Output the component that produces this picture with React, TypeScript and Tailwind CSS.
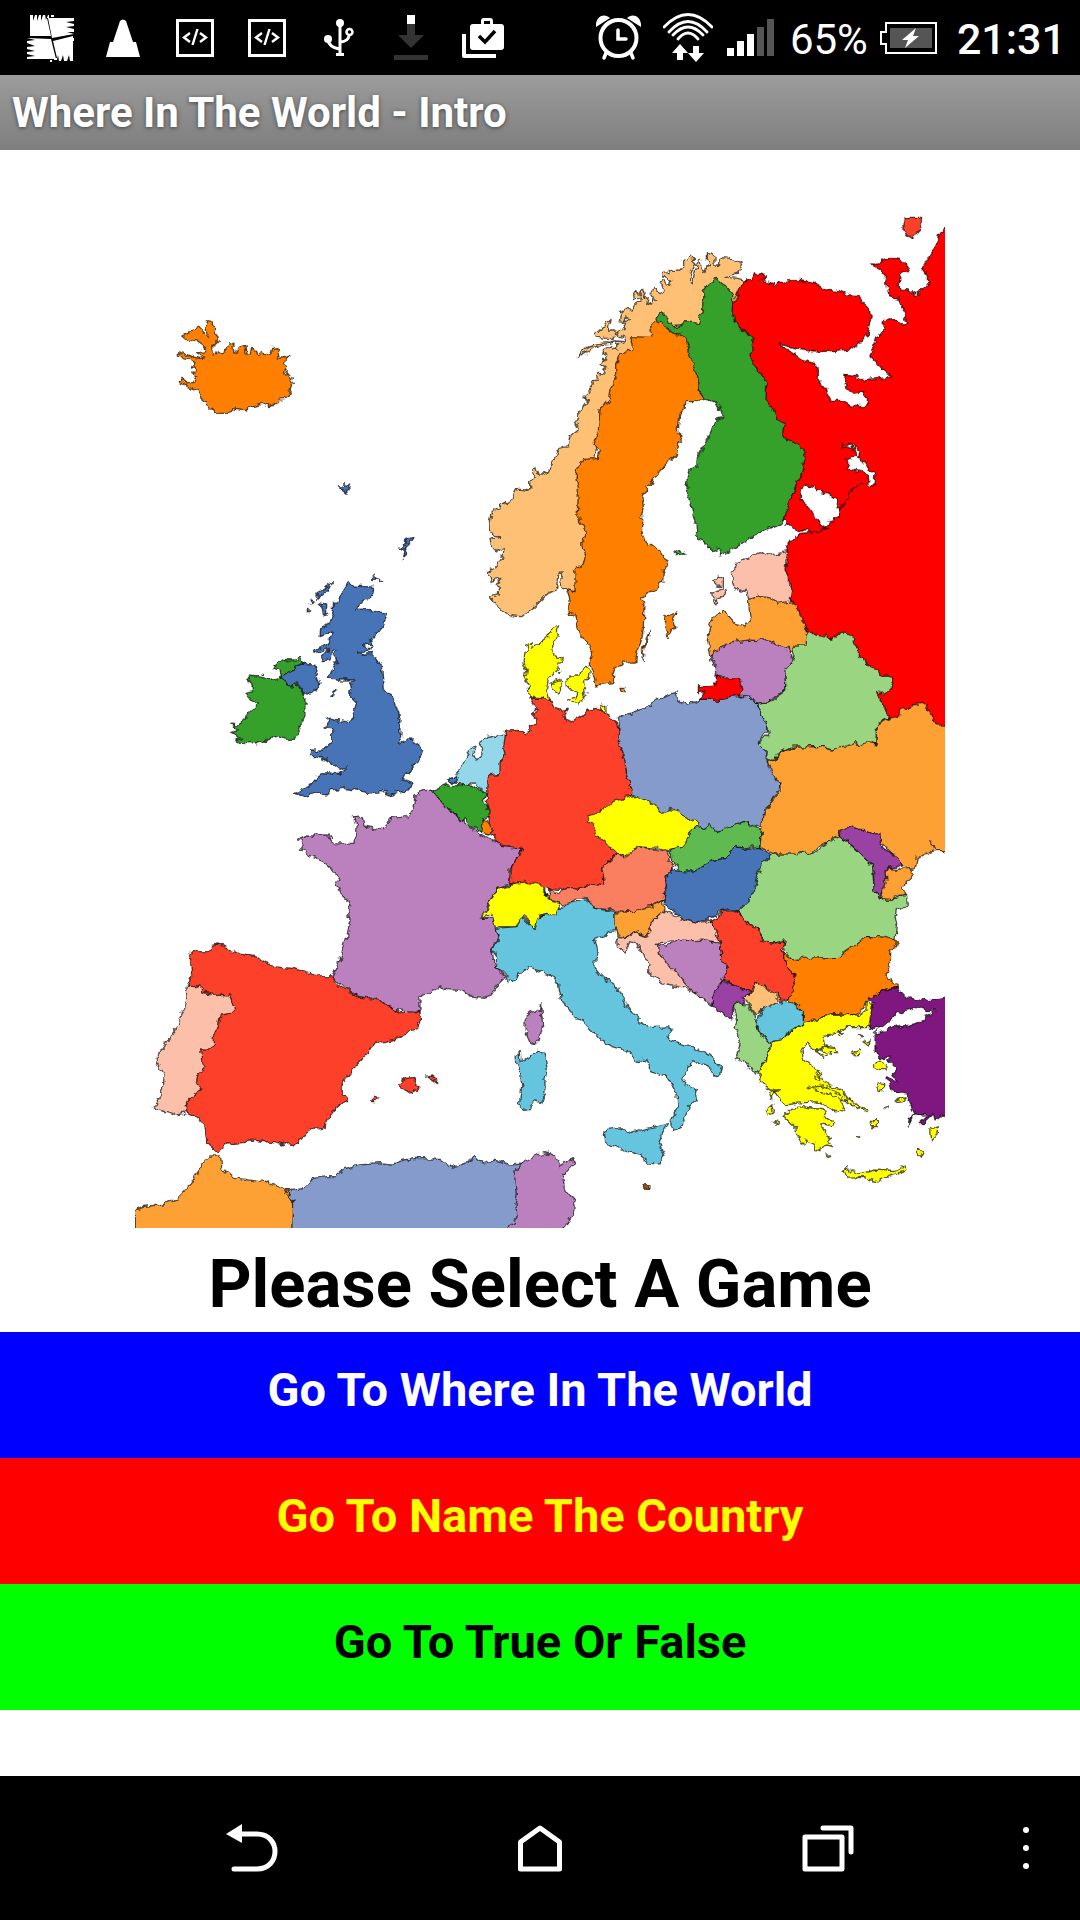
import React from 'react';

type Shape = [fill: string, d: string];
type Sheet = { x: number; y: number; shapes: Shape[] };

const RED = '#ff0000';
const SCARLET = '#fd4129';
const ORANGE = '#ff8000';
const AMBER = '#fea135';
const SAND = '#fdc074';
const GREEN = '#34a12c';
const MINT = '#9ad582';
const BLUE = '#4673b7';
const SLATE = '#849bcb';
const SKY = '#65c5de';
const LILAC = '#bb80be';
const VIOLET = '#9a42a4';
const PURPLE = '#80187f';
const PINK = '#fcbfaa';
const YELLOW = '#ffff00';
const WHITE = '#ffffff';

// Each sheet is one part of the continent, placed by its own origin.
const sheets: Sheet[] = [
  {
    x: 360, y: 600,
    shapes: [
      [ORANGE, 'M185 408L208 398 218 385 235 378 242 385 250 402 262 410 256 375 260 362 272 364 282 375 286 395 295 420 278 440 280 465 300 452 305 462 318 458 328 425 338 430 342 460 350 458 355 442 378 436 382 468 390 468 395 445 404 448 412 465 428 455 440 466 452 462 458 442 470 440 478 475 510 468 490 485 500 498 490 515 505 525 520 545 512 560 510 580 495 595 475 598 465 615 450 620 430 612 400 620 375 632 335 626 325 640 290 640 270 622 250 605 240 578 212 562 180 552 182 540 190 538 195 548 220 548 230 530 218 520 230 508 216 500 225 488 208 478 175 468 175 458 200 465 240 475 250 470 230 458 258 455 250 435 232 422 205 425Z'],
      [BLUE, 'M655 860L668 860 672 850 680 860 692 852 688 868 678 880 665 870Z'],
      [BLUE, 'M882 1008L860 1015 850 1030 855 1040 840 1045 855 1050 850 1075 860 1060 862 1030 878 1020Z'],
    ],
  },
  {
    x: 2100, y: 600,
    shapes: [
      [RED, 'M138 240L158 238 163 218 178 222 200 228 198 236 180 240 218 250 222 266 232 248 250 246 268 242 300 241 345 250 378 270 420 275 450 288 478 290 490 308 508 325 512 360 502 400 480 430 455 447 400 452 345 456 290 448 235 430 252 445 270 455 310 480 345 490 355 510 355 540 380 570 390 604 425 604 450 618 495 620 503 600 488 575 462 580 432 555 435 525 470 530 490 542 530 538 578 527 558 517 530 490 510 470 525 420 548 395 550 362 585 358 600 370 620 372 612 335 595 295 567 290 560 250 545 210 508 192 535 192 550 182 570 172 605 180 628 205 600 225 598 265 625 270 648 284 685 255 680 225 668 205 690 165 705 145 715 110 735 80 770 70V1590H700L520 1540 325 1350 325 1295 295 1230 272 1200 275 1170 265 1140 255 1110 262 1080 262 1055 258 1030 275 1025 300 1000 368 994 330 997 320 990 290 990 262 975 255 960 235 970 200 940 180 800 110 520 70 330Z'],
      [WHITE, 'M318 855L345 860 350 872 380 878 410 900 418 945 405 955 398 962 384 965 378 985 365 975 345 950 330 925 300 900 305 870Z'],
      [WHITE, 'M420 728L432 740 455 735 478 755 476 772 490 790 525 815 522 858 505 855 502 830 490 815 450 808 440 780 468 768 460 745 430 740Z'],
      ['none', 'M415 930L440 900 455 872 475 855 495 852M430 780L440 770M360 992L380 985'],
      [SCARLET, 'M612 52L665 52 662 90 640 114 622 108 612 95Z'],
    ],
  },
  {
    x: 1380, y: 690,
    shapes: [
      [SAND, 'M848 105L835 95 815 92 808 82 790 80 778 90 775 112 765 108 765 80 742 68 742 90 750 105 740 108 735 125 727 118 725 95 715 88 712 118 703 122 695 158 688 152 695 125 708 100 700 92 700 78 690 75 682 92 668 90 668 108 660 120 640 122 628 115 622 128 605 130 605 145 618 140 635 150 632 165 620 165 612 152 602 160 608 178 600 192 582 175 570 185 580 200 590 210 575 205 575 225 560 220 565 205 550 200 555 190 548 178 540 195 530 178 518 195 520 210 540 200 545 215 525 225 512 242 500 235 485 245 478 272 495 275 500 255 505 270 490 280 495 295 482 305 470 302 478 318 495 325 490 340 470 345 470 360 450 350 430 360 425 375 440 370 440 390 430 388 420 400 438 410 425 420 435 432 412 430 410 450 398 452 400 465 385 470 388 490 375 500 382 515 370 530 355 545 360 560 345 580 355 600 330 620 325 650 300 655 280 690 265 725 248 735 238 735 230 712 215 725 225 740 212 755 212 780 185 775 170 775 160 795 155 810 140 820 110 835 95 850 90 880 92 912 122 918 90 925 95 955 105 965 130 950 125 985 105 1015 85 1025 90 1055 122 1045 108 1065 125 1075 115 1090 92 1100 105 1125 130 1145 160 1158 185 1160 230 1125 265 1090 290 1080 292 1045 300 1022 305 1070 335 1090 400 1050 400 700 450 500 600 340 700 300 800 200 822 215 840 175 858 150 835 146 795 140 835 130Z'],
      [SAND, 'M355 385L362 368 385 348 420 340 480 335 440 325 410 322 405 312 430 290 450 268 445 300 465 300 468 315 455 330 488 335 400 352 372 370Z'],
      [ORANGE, 'M585 272L640 290 690 330 700 400 715 430 715 480 732 508 700 515 678 515 675 535 662 548 658 565 655 600 665 635 650 655 645 680 610 710 590 735 580 740 575 765 555 768 560 785 545 800 550 830 545 860 545 910 560 942 580 945 600 960 625 1000 610 1030 608 1055 595 1065 590 1078 565 1085 545 1105 552 1120 550 1200 540 1240 530 1270 528 1295 490 1300 465 1315 460 1330 462 1358 408 1365 400 1335 388 1300 395 1265 370 1225 355 1200 345 1155 330 1150 330 1110 320 1080 345 1085 345 1020 370 1005 375 980 365 940 380 910 375 895 360 880 352 850 355 780 348 740 355 710 370 688 415 685 418 665 400 640 415 600 420 540 445 510 450 480 470 440 470 400 480 370 515 360 518 320 575 322 572 285Z'],
      [GREEN, 'M768 148L785 162 800 170 818 190 818 220 815 255 830 285 850 300 880 325 870 380 890 415 920 460 918 510 945 545 950 570 975 580 970 625 1010 640 1035 660 1032 710 1000 790 980 845 960 885 910 900 870 925 840 945 785 978 775 955 755 965 735 935 710 925 708 880 700 860 690 810 678 760 690 720 710 710 712 680 745 620 765 570 790 565 780 530 765 515 735 508 715 480 712 430 690 380 680 330 660 312 640 310 595 275 590 262 598 248 615 255 640 290 660 288 680 275 715 280 728 240 728 185 745 160Z'],
      [GREEN, 'M642 965L655 958 675 970 655 978Z'],
    ],
  },
  {
    x: 600, y: 1680,
    shapes: [
      [LILAC, 'M697 690L740 740 840 825 880 840 965 865 930 930 928 975 895 985 840 1075 880 1075 895 1140 875 1165 885 1225 920 1250 890 1280 870 1310 850 1315 820 1312 775 1288 740 1286 715 1278 690 1300 660 1310 660 1355 590 1350 525 1315 470 1310 395 1250 420 1200 440 1130 450 1085 445 1055 455 1035 425 1005 415 980 410 970 420 960 400 930 370 905 320 885 310 868 298 868 310 855 298 835 320 825 385 825 400 848 465 850 468 800 460 768 490 770 495 798 550 812 570 775 620 770 640 740 645 705 665 692Z'],
      ['#95d7ea', 'M770 655L775 640 795 600 808 570 825 558 820 580 830 600 845 585 848 570 838 548 860 530 880 525 922 530 935 570 930 600 912 645 880 680 870 710 820 672 770 670 745 665 760 650 745 655Z'],
      [BLUE, 'M742 658L755 648 762 655 774 652 770 664 758 670Z'],
      [GREEN, 'M697 690L735 675 760 680 800 670 825 685 860 700 850 720 862 738 872 750 870 770 850 780 850 820 815 800 795 775 780 785 765 760 740 745Z'],
      [ORANGE, 'M850 780L862 785 875 800 870 825 845 820Z'],
      [BLUE, 'M445 68L460 78 500 80 522 82 518 105 475 130 470 150 510 152 560 160 550 195 515 240 520 258 490 252 500 265 515 265 510 272 470 275 495 282 515 280 530 295 545 320 550 390 580 410 590 440 600 470 600 520 605 530 595 550 620 540 640 540 660 555 668 575 655 605 632 625 625 638 610 645 605 655 640 668 625 690 590 698 570 705 545 695 500 700 470 690 425 685 395 690 380 708 355 695 335 700 305 710 278 702 300 695 325 680 345 660 370 638 420 640 445 618 420 628 395 610 380 600 350 590 330 590 332 570 370 570 395 545 395 510 370 505 390 495 382 470 390 468 400 480 440 485 455 478 470 430 450 410 455 385 450 370 465 360 420 360 385 352 395 330 410 305 400 280 412 272 395 270 390 300 370 302 365 290 385 265 345 280 342 268 375 255 388 240 400 215 360 230 362 205 385 195 395 170 400 150 400 125 425 115 430 90Z'],
      [BLUE, 'M398 68L388 85 365 105 350 115 352 95 370 85ZM358 130L380 135 380 160 370 165 368 148ZM325 148L332 150 325 158ZM330 118L345 125 332 132ZM512 62L525 42 530 55 542 62 530 60ZM385 410L408 390 405 405 390 412Z'],
      [GREEN, 'M220 325L250 298 285 300 300 292 308 312 275 330 245 350 270 380 290 372 315 405 315 470 300 500 285 538 260 538 230 530 170 552 115 550 110 540 125 535 95 518 115 510 92 492 115 495 135 480 140 465 175 432 150 420 138 400 158 395 155 370 140 358 150 345 190 350 215 358 240 350 245 340Z'],
      [BLUE, 'M245 350L275 332 295 312 345 315 350 345 360 370 345 392 325 402 312 398 290 368 270 384Z'],
    ],
  },
  {
    x: 1440, y: 1800,
    shapes: [
      [ORANGE, 'M555 50L590 38 578 60 585 80 575 92 565 112 552 75ZM512 90L508 110 495 140 490 178 487 150 498 120ZM420 262L438 262 435 275 424 275Z'],
      [SLATE, 'M415 355L450 340 495 325 535 295 585 278 592 298 605 308 640 308 660 298 780 290 800 280 830 310 860 370 860 395 835 430 862 450 862 485 900 545 900 560 850 640 858 685 800 668 715 695 640 690 550 660 455 600 440 520 412 440 418 370Z'],
      [SCARLET, 'M150 295L205 295 215 315 250 335 268 325 255 345 258 358 280 365 305 350 325 330 355 328 385 345 398 360 412 370 418 400 415 430 435 480 440 530 455 575 455 600 340 650 410 760 365 805 375 855 340 850 300 868 230 868 90 850 95 800 125 745 60 735 35 700 25 650 22 600 25 525 60 520 60 490 75 460 70 440 80 390 120 388 135 405 150 395 148 375 172 372 160 340 168 325Z'],
      [YELLOW, 'M235 80L230 115 218 140 222 170 250 178 248 188 230 190 235 205 205 235 200 270 210 300 180 292 150 292 148 260 135 230 140 210 132 190 135 155 145 150 140 135 160 125 155 145 180 130 205 110 215 90Z'],
      [YELLOW, 'M210 250L240 238 245 270 235 283 215 270ZM260 240L275 225 300 225 305 200 320 200 328 215 325 235 310 245 318 275 305 305 290 312 265 300 285 292 290 275 262 260ZM362 312L378 320 378 335 362 330ZM235 215L240 215 238 222Z'],
      [YELLOW, 'M325 655L365 630 400 605 432 595 435 582 455 592 470 588 520 610 545 640 560 635 570 625 600 635 605 645 650 665 650 680 630 700 620 730 600 745 565 752 540 745 470 740 460 762 435 770 410 762 380 730 350 705 345 680Z'],
      ['#5fba50', 'M570 755L605 740 620 720 635 685 665 680 680 690 685 675 715 695 750 678 800 668 845 690 838 745 815 738 795 745 765 740 740 775 705 780 670 800 665 812 610 818 575 785Z'],
      ['#fa7f61', 'M205 865L235 880 260 865 300 868 340 850 375 855 365 805 410 762 435 770 475 740 565 755 568 785 580 800 575 820 555 830 560 855 550 880 555 900 520 915 500 930 460 938 400 930 345 925 325 895 290 895 262 915 240 910 210 900Z'],
      [BLUE, 'M555 835L580 805 610 815 640 818 670 800 675 792 705 780 740 775 765 740 795 745 835 742 880 765 845 820 820 900 795 930 745 930 720 935 690 955 650 968 605 955 560 915 550 890 560 860Z'],
    ],
  },
  {
    x: 2040, y: 1620,
    shapes: [
      [PINK, 'M150 95L165 80 190 60 240 38 270 45 322 35 325 45 318 60 315 90 325 110 325 135 335 150 330 185 290 195 235 168 205 175 200 148 185 158 165 145 160 120ZM98 125L115 108 130 118 130 140 110 138ZM98 155L125 148 142 145 130 170 110 178 108 195 100 175Z'],
      [AMBER, 'M82 300L95 240 128 210 145 225 165 250 195 258 210 235 205 180 235 165 270 172 295 190 330 182 355 200 358 225 385 275 375 318 330 335 200 340 92 345Z'],
      [LILAC, 'M92 345L130 315 170 305 210 300 230 302 245 290 260 302 275 305 325 325 332 350 345 360 330 380 315 400 318 450 285 470 270 485 230 490 215 470 180 465 185 420 108 405 105 385Z'],
      [RED, 'M55 440L105 435 105 402 130 415 180 412 180 430 187 450 180 465 130 478 60 478 75 455 55 458Z'],
      [MINT, 'M335 325L350 315 375 315 378 285 395 280 430 288 435 280 455 298 475 280 500 280 520 290 525 315 535 325 535 345 550 355 560 375 595 390 600 408 625 405 640 425 630 450 615 458 590 460 610 495 625 535 595 550 590 610 550 615 460 630 420 620 330 622 295 640 285 660 270 665 258 655 262 635 235 612 265 580 260 555 230 490 275 485 290 470 318 450 315 395 342 355Z'],
      [MINT, 'M280 942L365 935 390 945 445 910 475 880 530 930 578 980 582 1050 610 1082 650 1075 665 1062 680 1065 682 1100 665 1112 650 1102 645 1130 650 1150 645 1200 560 1190 520 1225 480 1252 400 1255 340 1262 310 1225 315 1205 250 1210 240 1170 200 1150 175 1110 215 1075 235 1000 250 970Z'],
      [AMBER, 'M262 665L285 660 300 640 330 622 425 620 460 630 480 620 510 618 525 605 535 620 560 608 592 612 592 555 625 535 655 530 660 510 685 508 695 495 725 490 745 505 755 530 768 555 830 555V932H765L740 940 712 955 705 985 670 980 600 900 510 875 475 885 445 910 410 922 390 945 365 935 350 942 285 942 240 920 245 870 248 830 270 790 300 750 300 735 275 700ZM615 985L650 988 700 985 690 1015 668 1040 678 1062 650 1068 635 1082 605 1078Z'],
      [VIOLET, 'M475 878L515 858 530 868 555 868 575 880 600 882 605 915 610 925 645 945 665 975 615 990 618 1030 600 1075 582 1050 580 980 530 930Z'],
      ['none', 'M745 898L758 912 765 930'],
    ],
  },
  {
    x: 390, y: 2580,
    shapes: [
      [SCARLET, 'M175 285L190 275 235 275 240 260 265 255 290 262 300 275 345 285 380 290 430 320 490 325 530 338 570 350 605 350 625 375 680 410 735 418 780 440 810 458 870 455 872 485 860 505 820 525 790 542 730 555 715 580 680 615 640 665 640 705 658 722 620 740 610 755 590 780 585 805 545 808 515 830 490 858 475 850 460 855 430 848 360 840 340 848 290 852 262 875 235 850 225 830 220 790 190 765 170 755 172 385 185 350 182 300Z'],
      [PINK, 'M172 378L190 380 212 375 215 395 240 402 298 405 305 425 318 440 300 460 270 465 265 500 250 530 250 560 235 570 212 570 215 600 225 620 205 640 200 660 212 685 190 705 170 725 168 758 140 765 110 755 70 745 90 710 100 690 102 645 75 605 90 575 135 510 165 430Z'],
      [SCARLET, 'M802 675L830 655 855 652 852 665 868 680 845 700 820 685ZM890 648L905 645 920 658 920 668ZM722 722L735 708 750 708 738 722Z'],
      [SLATE, 'M468 992L495 990 520 985 550 955 590 950 615 950 640 928 685 912 745 908 785 912 830 898 860 895 930 898 965 920 1010 908 1035 892 1060 910 1095 900 1135 912 1200 908V1120H480L488 1025Z'],
      [AMBER, 'M16 1047L50 1038 90 1035 140 1018 180 975 235 888 272 888 275 920 290 935 310 952 370 962 405 968 418 960 430 975 465 990 488 1020 485 1120H16Z'],
    ],
  },
  {
    x: 1440, y: 2580,
    shapes: [
      [LILAC, 'M105 935L130 908 160 890 195 878 220 885 228 888 240 920 265 905 280 895 285 908 245 950 250 985 285 1020 285 1055 250 1104V1120H70L108 1075 105 1040 112 1000Z'],
      [SKY, 'M45 205L105 200 125 168 160 205 180 165 235 150 262 130 325 118 345 145 405 155 408 212 385 215 375 228 340 238 352 275 345 290 345 325 365 350 415 380 440 440 480 485 520 502 572 500 578 512 560 535 600 550 640 560 690 585 725 620 718 648 700 645 685 615 638 602 615 635 610 672 650 690 652 725 625 735 620 760 600 805 575 812 572 790 580 765 595 740 590 700 560 650 540 648 515 635 500 600 470 605 440 570 395 560 370 545 340 515 305 480 285 475 265 445 245 425 235 370 220 350 190 340 150 320 125 335 100 365 80 362 85 345 45 325 50 290 35 268 58 240Z'],
      [YELLOW, 'M5 175L35 120 55 85 85 80 90 72 145 65 180 70 195 90 198 108 215 125 240 130 235 150 225 170 200 160 180 165 172 190 160 208 145 185 130 165 105 200 50 200 35 165Z'],
      ['#1c355e', 'M192 90L200 105 200 115 190 110Z'],
      [SKY, 'M370 820L385 808 420 803 450 818 500 805 565 790 545 820 538 850 552 885 540 912 510 910 480 885 430 868 375 848Z'],
      [SKY, 'M108 585L118 578 120 608 150 590 175 570 192 580 202 625 195 660 195 700 185 730 160 725 150 745 130 748 118 735 125 680 122 640 110 610Z'],
      [LILAC, 'M135 470L150 458 178 452 182 432 188 495 178 540 165 555 150 545 135 510Z'],
      ['#b45a00', 'M492 974L510 974 510 986 495 984Z'],
      [AMBER, 'M405 155L460 158 490 145 520 138 550 122 555 150 520 180 510 210 495 230 460 215 440 232 415 228 405 190Z'],
      [PINK, 'M410 235L440 232 460 215 500 230 520 180 552 150 600 175 650 190 690 180 710 215 718 245 600 245 535 248 540 280 600 335 680 415 750 470 690 428 620 385 560 375 505 340 510 310 490 290 480 260 450 245 432 280 412 260Z'],
      [LILAC, 'M532 250L560 258 600 240 640 242 680 240 720 250 725 290 745 320 740 350 715 370 698 440 640 395 580 330 535 280Z'],
    ],
  },
  {
    x: 1980, y: 2640,
    shapes: [
      [SCARLET, 'M155 125L185 95 235 92 265 135 300 150 305 185 340 190 375 180 368 215 380 250 408 295 395 330 385 360 360 365 350 340 290 305 270 335 230 320 190 298 205 265 185 240 185 220 178 185Z'],
      [VIOLET, 'M185 300L230 318 270 335 250 365 220 380 215 420 160 380 160 345 170 330Z'],
      [SAND, 'M252 352L275 335 290 305 315 318 330 335 352 340 350 368 315 380 290 405 275 385Z'],
      [ORANGE, 'M372 220L400 240 430 235 540 232 560 210 620 170 665 170 712 182 710 200 690 205 688 240 690 260 678 285 712 318 665 335 620 365 595 405 520 402 432 430 425 390 385 360 408 292 380 255Z'],
      [MINT, 'M220 380L235 368 265 375 285 405 295 450 330 490 320 540 290 585 270 560 232 535 240 490 225 445 230 420Z'],
      [YELLOW, 'M330 490L375 465 430 430 520 402 600 405 618 390 618 368 640 375 630 440 560 440 530 460 490 470 500 500 480 512 465 512 440 490 425 505 430 540 480 580 485 600 510 620 545 630 580 670 540 660 555 698 520 690 480 665 430 668 375 675 350 640 320 620 295 595 300 570 320 540Z'],
      [SKY, 'M290 430L305 390 340 375 375 365 410 375 430 395 430 430 410 445 380 460 365 480 330 485 305 470Z'],
      [YELLOW, 'M372 710L395 685 430 680 490 690 500 715 520 725 515 738 480 730 505 775 515 800 500 795 470 812 460 790 440 780 430 798 410 765 408 745Z'],
      [YELLOW, 'M552 870L560 860 575 875 600 880 650 870 700 875 735 858 738 872 690 888 650 905 610 892 560 895Z'],
      [YELLOW, 'M445 622L490 618 548 645 550 660 500 640ZM555 655L575 660 600 680 625 690 620 695 560 668ZM490 498L520 502 535 515 510 515 515 528 495 520ZM468 515L495 530 485 535ZM465 582L480 590 478 602 465 595ZM535 455L550 460 542 472Z'],
      [YELLOW, 'M595 465L605 468 600 474ZM612 488L628 482 622 495ZM578 515L600 505 598 520 580 522ZM640 558L655 545 680 558 682 570 655 568ZM652 605L668 608 668 632 658 635 650 615ZM705 660L735 650 735 660 712 665ZM672 685L690 675 680 688ZM628 735L640 722 655 722 655 740 635 740ZM585 772L602 765 595 775ZM318 690L335 675 340 700 325 705ZM340 725L358 728 350 735ZM325 635L355 632 335 642 335 660ZM498 822L515 822 510 832ZM812 750L835 740 830 765 815 785ZM775 805L788 820 785 832 775 822Z'],
      [PURPLE, 'M625 355L665 335 690 328 710 318 720 335 735 350 785 362 870 350V712L845 705 825 720 820 700 790 728 775 728 800 705 765 705 755 715 745 738 752 715 765 700 745 660 745 640 710 635 690 625 680 590 715 605 700 580 705 560 680 540 695 525 660 540 645 515 645 465 665 455 680 445 655 440 625 445 635 390 638 370Z'],
      [WHITE, 'M640 458L680 430 705 410 712 400 755 390 775 382 800 392 830 390 790 410 795 420 760 430 725 442 712 432 680 452 650 462Z'],
    ],
  },
];

function EuropeMap() {
  return (
    <svg role="img" aria-label="Map of Europe" viewBox="405 630 2430 3054" className="mx-auto block w-3/4">
      <defs>
        <clipPath id="frame">
          <path d="M405 630H2835V3684H405Z" />
        </clipPath>
        <filter id="coast" x="0" y="0" width="1" height="1">
          <feTurbulence type="fractalNoise" baseFrequency="0.05" numOctaves="2" seed="4" />
          <feDisplacementMap in="SourceGraphic" scale="22" xChannelSelector="R" yChannelSelector="G" />
        </filter>
      </defs>
      <g clipPath="url(#frame)">
        <g filter="url(#coast)" stroke="#000" strokeOpacity=".65" strokeWidth="4" strokeLinejoin="round">
          <path d="M300 500H2950V3800H300Z" fill="#fff" stroke="none" />
          {sheets.map((s) => (
            <g key={`${s.x}-${s.y}`} transform={`translate(${s.x} ${s.y})`}>
              {s.shapes.map(([fill, d]) => (
                <path key={d} fill={fill} d={d} />
              ))}
            </g>
          ))}
        </g>
      </g>
    </svg>
  );
}

function Cell({ children }: { children: React.ReactNode }) {
  return <span className="flex w-[72px] justify-center">{children}</span>;
}

function CodeIcon() {
  return (
    <svg width="38" height="38" viewBox="0 0 38 38" fill="none" stroke="#fff">
      <path strokeWidth="3" d="M1.5 1.5H36.5V36.5H1.5Z" />
      <path strokeWidth="2.4" d="M14 14L8 18.5 14 23M24 14L30 18.5 24 23M21.500 10L16.500 26" />
    </svg>
  );
}

function StatusBar() {
  return (
    <header className="flex h-[75px] items-center justify-between bg-black pl-[15px] pr-[14px] text-white">
      <div className="flex items-center">
        <Cell>
          <svg width="48" height="48" viewBox="0 0 48 48" fill="#fff">
            <path d="M3 1H6V7L8 1H10V7L12 1H14V7L16 1H18L19 6L21 1H22V4H20L24 22L3 22Z" />
            <path d="M21 4H47V7L39 8 47 10V12L39 13 47 15V18L40 18 47 20L25 24Z" />
            <path d="M0 24L24 25 29 45H0V43L8 42 0 40V38L8 37 0 35V33L8 32 0 29V27L8 26Z" />
            <path d="M26 27L46 22V47H43L42 41 40 47H37L36 41 34 47H32L31 41 30 46H27V44H30Z" />
            <path d="M24 1H27V3H24ZM45 24H47V27H45ZM23 46H25V48H23Z" />
          </svg>
        </Cell>
        <Cell>
          <svg width="34" height="38" viewBox="0 0 34 38" fill="#fff">
            <path d="M14 2Q17-1 20 2L27 23H30L34 38H0L4 23H7Z" />
          </svg>
        </Cell>
        <Cell><CodeIcon /></Cell>
        <Cell><CodeIcon /></Cell>
        <Cell>
          <svg width="30" height="38" viewBox="0 0 30 38" fill="none" stroke="#fff" strokeWidth="3">
            <path d="M16 4V35M4 21Q5 28 15 30M25 17Q24 22 17 23" />
            <circle cx="16" cy="4" r="4" fill="#fff" stroke="none" />
            <circle cx="4" cy="20" r="4" fill="#fff" stroke="none" />
            <circle cx="25.500" cy="13" r="3" strokeWidth="2.500" />
            <path d="M12 35.500H20" />
          </svg>
        </Cell>
        <Cell>
          <svg width="34" height="45" viewBox="0 0 34 45" fill="#333">
            <path d="M13 9H21V20H30L17 33 4 20H13ZM0 40H34V45H0Z" />
            <path fill="#fff" d="M13 0H21V9H13Z" />
          </svg>
        </Cell>
        <Cell>
          <svg width="42" height="40" viewBox="0 0 42 40">
            <path fill="none" stroke="#fff" strokeWidth="4" strokeLinejoin="round" d="M2 16V38H34" />
            <path fill="#fff" fillRule="evenodd" d="M11 6H19V3Q19 0 22 0H28Q31 0 31 3V6H39Q42 6 42 9V29Q42 32 39 32H11Q8 32 8 29V9Q8 6 11 6ZM22 3V6H28V3Z" />
            <path fill="none" stroke="#000" strokeWidth="3.500" d="M17 18L23 24 33 13" />
          </svg>
        </Cell>
      </div>
      <div className="flex items-center">
        <svg width="45" height="46" viewBox="0 0 45 46" fill="none" stroke="#fff">
          <circle cx="22.500" cy="23" r="18" strokeWidth="4" />
          <path strokeWidth="3.500" strokeLinecap="round" d="M22 15V24H30M10 38L8 43M35 38L37 43" />
          <path fill="#fff" stroke="none" d="M0 12C-1 2 8-3 14 3ZM45 12C46 2 37-3 31 3Z" />
        </svg>
        <svg className="ml-[22px]" width="50" height="49" viewBox="0 0 50 49" fill="none" stroke="#fff" strokeWidth="2.800" strokeLinecap="round">
          <path d="M1 14Q25-11 49 14M6 19Q25-2 44 19M10 22Q25 6 40 22M15 26Q25 14 35 26" />
          <path fill="#fff" stroke="none" d="M17 31L25 40H20V47H14V40H9ZM30 33H36V40H41L33 49 25 40H30Z" />
        </svg>
        <svg className="ml-3.5" width="47" height="37" viewBox="0 0 47 37" fill="#fff">
          <path d="M0 29H7V37H0ZM10 22H17V37H10ZM20 15H27V37H20Z" />
          <path fill="#555" d="M30 8H37V37H30ZM40 0H47V37H40Z" />
        </svg>
        <span className="ml-4 pt-1 text-[42px] leading-none">65%</span>
        <svg className="ml-3" width="57" height="32" viewBox="0 0 57 32">
          <path fill="none" stroke="#fff" strokeWidth="2" d="M6 1H56V31H6V22H1V10H6Z" />
          <path fill="#555" d="M10 6H52V26H10Z" />
          <path fill="#fff" d="M36 6L22 18H28L25 26 39 14H33Z" />
        </svg>
        <time className="ml-5 pt-1 text-[43px] leading-none font-medium">21:31</time>
      </div>
    </header>
  );
}

function NavBar() {
  return (
    <nav className="grid h-36 grid-cols-[108fr_288fr_288fr_288fr_108fr] items-center bg-black">
      <span />
      <button aria-label="Back" className="flex justify-center">
        <svg width="52" height="48" viewBox="0 0 52 48" fill="none" stroke="#fff" strokeWidth="5" strokeLinecap="round">
          <path d="M12 10H31C55 10 55 45 31 45H8" />
          <path fill="#fff" stroke="none" d="M0 10L16 0V19Z" />
        </svg>
      </button>
      <button aria-label="Home" className="flex justify-center">
        <svg width="44" height="48" viewBox="0 0 44 48" fill="none" stroke="#fff" strokeWidth="5" strokeLinejoin="round">
          <path d="M2.500 18L22 4 41.500 18V45H2.500Z" />
        </svg>
      </button>
      <button aria-label="Recent apps" className="flex justify-center">
        <svg width="52" height="48" viewBox="0 0 52 48" fill="none" stroke="#fff" strokeWidth="5" strokeLinejoin="round" strokeLinecap="round">
          <path d="M3 13H40V45H3ZM21 4H49V28" />
        </svg>
      </button>
      <button aria-label="More options" className="flex justify-center">
        <svg width="6" height="42" viewBox="0 0 6 42" fill="#fff">
          <circle cx="3" cy="3" r="3" />
          <circle cx="3" cy="21" r="3" />
          <circle cx="3" cy="39" r="3" />
        </svg>
      </button>
    </nav>
  );
}

export default function App() {
  return (
    <div className="flex min-h-screen flex-col bg-white font-[Roboto,sans-serif]">
      <StatusBar />
      <div className="flex h-[75px] items-center bg-gradient-to-b from-[#9c9c9c] to-[#7e7e7e] px-3">
        <h1 className="text-[42px] leading-none font-bold text-white [text-shadow:0_1px_4px_#444]">
          Where In The World - Intro
        </h1>
      </div>
      <main className="flex flex-1 flex-col pt-[60px]">
        <EuropeMap />
        <h2 className="pt-4 pb-2 text-center text-[67px] leading-[80px] font-bold text-black">Please Select A Game</h2>
        <button className="h-[126px] bg-[#0000ff] pb-3 text-[47px] leading-none font-bold text-white">
          Go To Where In The World
        </button>
        <button className="h-[126px] bg-[#ff0000] pb-3 text-[47px] leading-none font-bold text-[#ffff00]">
          Go To Name The Country
        </button>
        <button className="h-[126px] bg-[#00ff00] pb-3 text-[47px] leading-none font-bold text-black">
          Go To True Or False
        </button>
      </main>
      <NavBar />
    </div>
  );
}
